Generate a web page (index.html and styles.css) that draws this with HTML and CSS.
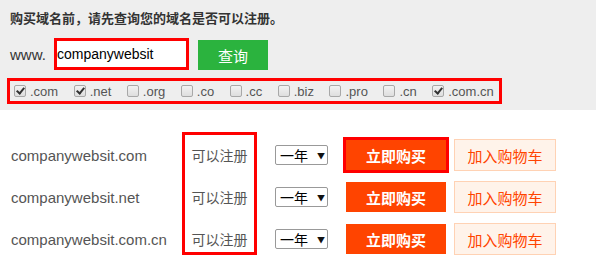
FILE: index.html
```html
<!DOCTYPE html>
<html lang="zh-CN">
<head>
<meta charset="utf-8">
<title>域名查询</title>
<link rel="stylesheet" href="styles.css">
</head>
<body>
<div class="top">
  <div class="title">购买域名前，请先查询您的域名是否可以注册。</div>
  <div class="search">
    <span class="www">www.</span>
    <div class="input">companywebsit</div>
    <button class="query">查询</button>
  </div>
  <div class="tlds">
    <label class="tld"><span class="cb on"></span>.com</label>
    <label class="tld"><span class="cb on"></span>.net</label>
    <label class="tld"><span class="cb"></span>.org</label>
    <label class="tld"><span class="cb"></span>.co</label>
    <label class="tld"><span class="cb"></span>.cc</label>
    <label class="tld"><span class="cb"></span>.biz</label>
    <label class="tld"><span class="cb"></span>.pro</label>
    <label class="tld"><span class="cb"></span>.cn</label>
    <label class="tld"><span class="cb on"></span>.com.cn</label>
  </div>
</div>
<div class="results">
  <div class="col col-domain">
    <div class="cell">companywebsit.com</div>
    <div class="cell">companywebsit.net</div>
    <div class="cell">companywebsit.com.cn</div>
  </div>
  <div class="col col-status">
    <div class="status-inner">
      <div class="cell">可以注册</div>
      <div class="cell">可以注册</div>
      <div class="cell">可以注册</div>
    </div>
  </div>
  <div class="col col-sel">
    <div class="cell"><span class="sel">一年<span class="arrow">▼</span></span></div>
    <div class="cell"><span class="sel">一年<span class="arrow">▼</span></span></div>
    <div class="cell"><span class="sel">一年<span class="arrow">▼</span></span></div>
  </div>
  <div class="col col-buy">
    <div class="cell"><button class="buy hl">立即购买</button></div>
    <div class="cell"><button class="buy">立即购买</button></div>
    <div class="cell"><button class="buy">立即购买</button></div>
  </div>
  <div class="col col-cart">
    <div class="cell"><button class="cart">加入购物车</button></div>
    <div class="cell"><button class="cart">加入购物车</button></div>
    <div class="cell"><button class="cart">加入购物车</button></div>
  </div>
</div>
</body>
</html>
```

FILE: styles.css
```css
* { box-sizing: border-box; }
html, body { margin: 0; padding: 0; background: #fff; }
body {
  width: 596px;
  height: 271px;
  overflow: hidden;
  font-family: "Liberation Sans", "Noto Sans CJK SC", sans-serif;
  color: #555;
}
.top {
  background: #eeeeee;
  height: 110px;
  padding: 10px 0 0 7px;
}
.title {
  padding-left: 3px;
  font-size: 13px;
  font-weight: bold;
  color: #333;
  line-height: 18px;
}
.search {
  display: flex;
  align-items: center;
  margin-top: 10px;
  height: 32px;
}
.www {
  padding-left: 3px;
  font-size: 15px;
  color: #333;
  width: 47px;
}
.input {
  width: 135px;
  height: 32px;
  border: 3px solid #ff0000;
  background: #fff;
  font-size: 14px;
  color: #000;
  line-height: 26px;
  padding-left: 0;
}
.query {
  margin-left: 9px;
  margin-top: 2px;
  width: 70px;
  height: 30px;
  border: 0;
  background: #2bb33e;
  color: #fff;
  font-family: inherit;
  font-size: 15px;
  padding: 0;
}
.tlds {
  margin-top: 8px;
  width: 495px;
  height: 26px;
  border: 3px solid #ff0000;
  display: flex;
  align-items: center;
  padding-left: 4px;
  gap: 15.5px;
}
.tld {
  display: flex;
  align-items: center;
  font-size: 13px;
  color: #555;
}
.cb {
  width: 12px;
  height: 12px;
  border: 1px solid #a8a8a8;
  border-radius: 2px;
  background: linear-gradient(#f2f2f2, #dedede);
  margin-right: 4px;
  position: relative;
}
.cb.on::after {
  content: "";
  position: absolute;
  left: 3px;
  top: 0px;
  width: 3px;
  height: 6px;
  border: solid #333;
  border-width: 0 2px 2px 0;
  transform: rotate(40deg);
}
.results {
  display: flex;
  padding: 24px 0 0 11px;
}
.col { display: flex; flex-direction: column; }
.cell {
  height: 42px;
  display: flex;
  align-items: center;
}
.col-domain {
  width: 171px;
  font-size: 15px;
  color: #555;
}
.col-status {
  width: 75px;
  height: 123px;
  margin-top: -2px;
  border: 3px solid #ff0000;
  font-size: 14px;
  color: #555;
}
.status-inner { margin-top: -1px; }
.col-status .cell { justify-content: center; }
.col-sel { margin-left: 18px; }
.sel {
  width: 53px;
  height: 20px;
  border: 1px solid #999;
  border-radius: 2px;
  background: #fff;
  font-size: 14px;
  color: #000;
  display: flex;
  align-items: center;
  padding-left: 4px;
  font-family: "Noto Sans CJK SC", sans-serif;
}
.arrow {
  font-size: 8px;
  margin-left: 9px;
  color: #111;
}
.col-buy { margin-left: 18px; }
.buy {
  width: 100px;
  height: 30px;
  border: 0;
  background: #ff4400;
  color: #fff;
  font-family: inherit;
  font-size: 15px;
  font-weight: bold;
  padding: 0;
}
.buy.hl { outline: 3px solid #ff0000; }
.col-cart { margin-left: 8px; }
.cart {
  width: 102px;
  height: 32px;
  border: 1px solid #ffd2b4;
  background: #fff3ea;
  color: #ff4400;
  font-family: inherit;
  font-size: 15px;
  padding: 0;
}
```
